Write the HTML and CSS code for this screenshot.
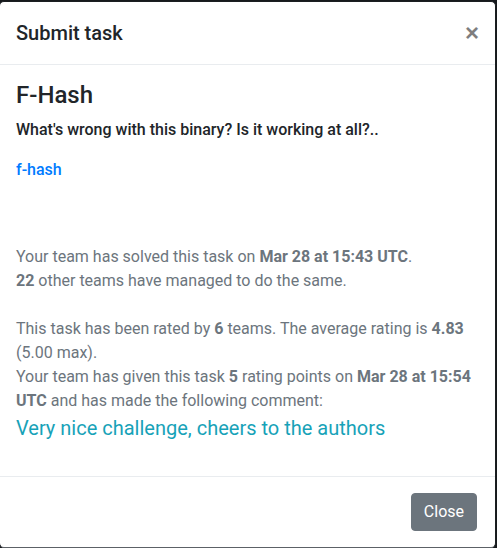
FILE: index.html
```html
<!DOCTYPE html>
<html>
<head>
<meta charset="utf-8">
<link rel="stylesheet" href="styles.css">
</head>
<body>
<div class="modal">
  <div class="modal-header">
    <h5 class="modal-title">Submit task</h5>
    <button class="close" type="button" aria-label="Close">×</button>
  </div>
  <div class="modal-body">
    <h4 class="task-title">F-Hash</h4>
    <p class="task-desc">What's wrong with this binary? Is it working at all?..</p>
    <p class="task-link"><a href="#">f-hash</a></p>
    <p class="muted solved">Your team has solved this task on <b>Mar 28 at 15:43 UTC</b>.<br><b>22</b> other teams have managed to do the same.</p>
    <p class="muted rating">This task has been rated by <b>6</b> teams. The average rating is <b>4.83</b> (5.00 max).<br>Your team has given this task <b>5</b> rating points on <b>Mar 28 at 15:54 UTC</b> and has made the following comment:</p>
    <p class="comment">Very nice challenge, cheers to the authors</p>
  </div>
  <div class="modal-footer">
    <button class="btn" type="button">Close</button>
  </div>
</div>
</body>
</html>
```
FILE: styles.css
```css
* { box-sizing: border-box; }
html, body { margin: 0; padding: 0; }
body {
  background: #16191c;
  padding-top: 1px;
  font-family: Roboto, "Liberation Sans", sans-serif;
  font-size: 16px;
  line-height: 1.5;
  color: #212529;
  height: 548px;
  overflow: hidden;
}
.modal {
  background: #fff;
  margin: 0 1px 0 -1px;
  border: 1px solid #1b1e21;
  border-bottom-color: #5c6166;
  border-radius: 5px;
  height: 547px;
  display: flex;
  flex-direction: column;
}
.modal-header {
  display: flex;
  align-items: flex-start;
  justify-content: space-between;
  padding: 16px;
  border-bottom: 1px solid #e9ecef;
}
.modal-title {
  margin: 0;
  font-size: 20px;
  font-weight: 500;
  line-height: 1.5;
}
.close {
  background: none;
  border: 0;
  padding: 0;
  margin: 0 0 0 auto;
  font-family: "Liberation Sans", sans-serif;
  font-size: 24px;
  font-weight: 700;
  line-height: 30px;
  color: #000;
  opacity: .5;
  text-shadow: 0 1px 0 #fff;
}
.modal-body {
  padding: 16px 16px 0;
  flex: 1;
}
.task-title {
  margin: 0 0 8px;
  font-size: 24px;
  font-weight: 500;
  line-height: 1.2;
}
.task-desc {
  margin: 0 0 16px;
  font-size: 16px;
  font-weight: 500;
  line-height: 24px;
}
.task-link {
  margin: 0 0 63px;
}
.task-link a {
  color: #007bff;
  text-decoration: none;
  font-weight: 500;
}
.muted { color: #6c757d; margin: 0; }
.muted b { font-weight: 700; }
.solved { margin-bottom: 24px; }
.comment {
  margin: 0 0 16px;
  font-size: 20px;
  line-height: 30px;
  color: #17a2b8;
}
.modal-footer {
  display: flex;
  justify-content: flex-end;
  align-items: center;
  padding: 16px 18px 16px 16px;
  border-top: 1px solid #e9ecef;
}
.btn {
  font-family: Roboto, "Liberation Sans", sans-serif;
  font-size: 16px;
  line-height: 1.5;
  color: #fff;
  background: #6c757d;
  border: 1px solid #6c757d;
  border-radius: 4px;
  padding: 6px 12px;
  height: 38px;
}
```
